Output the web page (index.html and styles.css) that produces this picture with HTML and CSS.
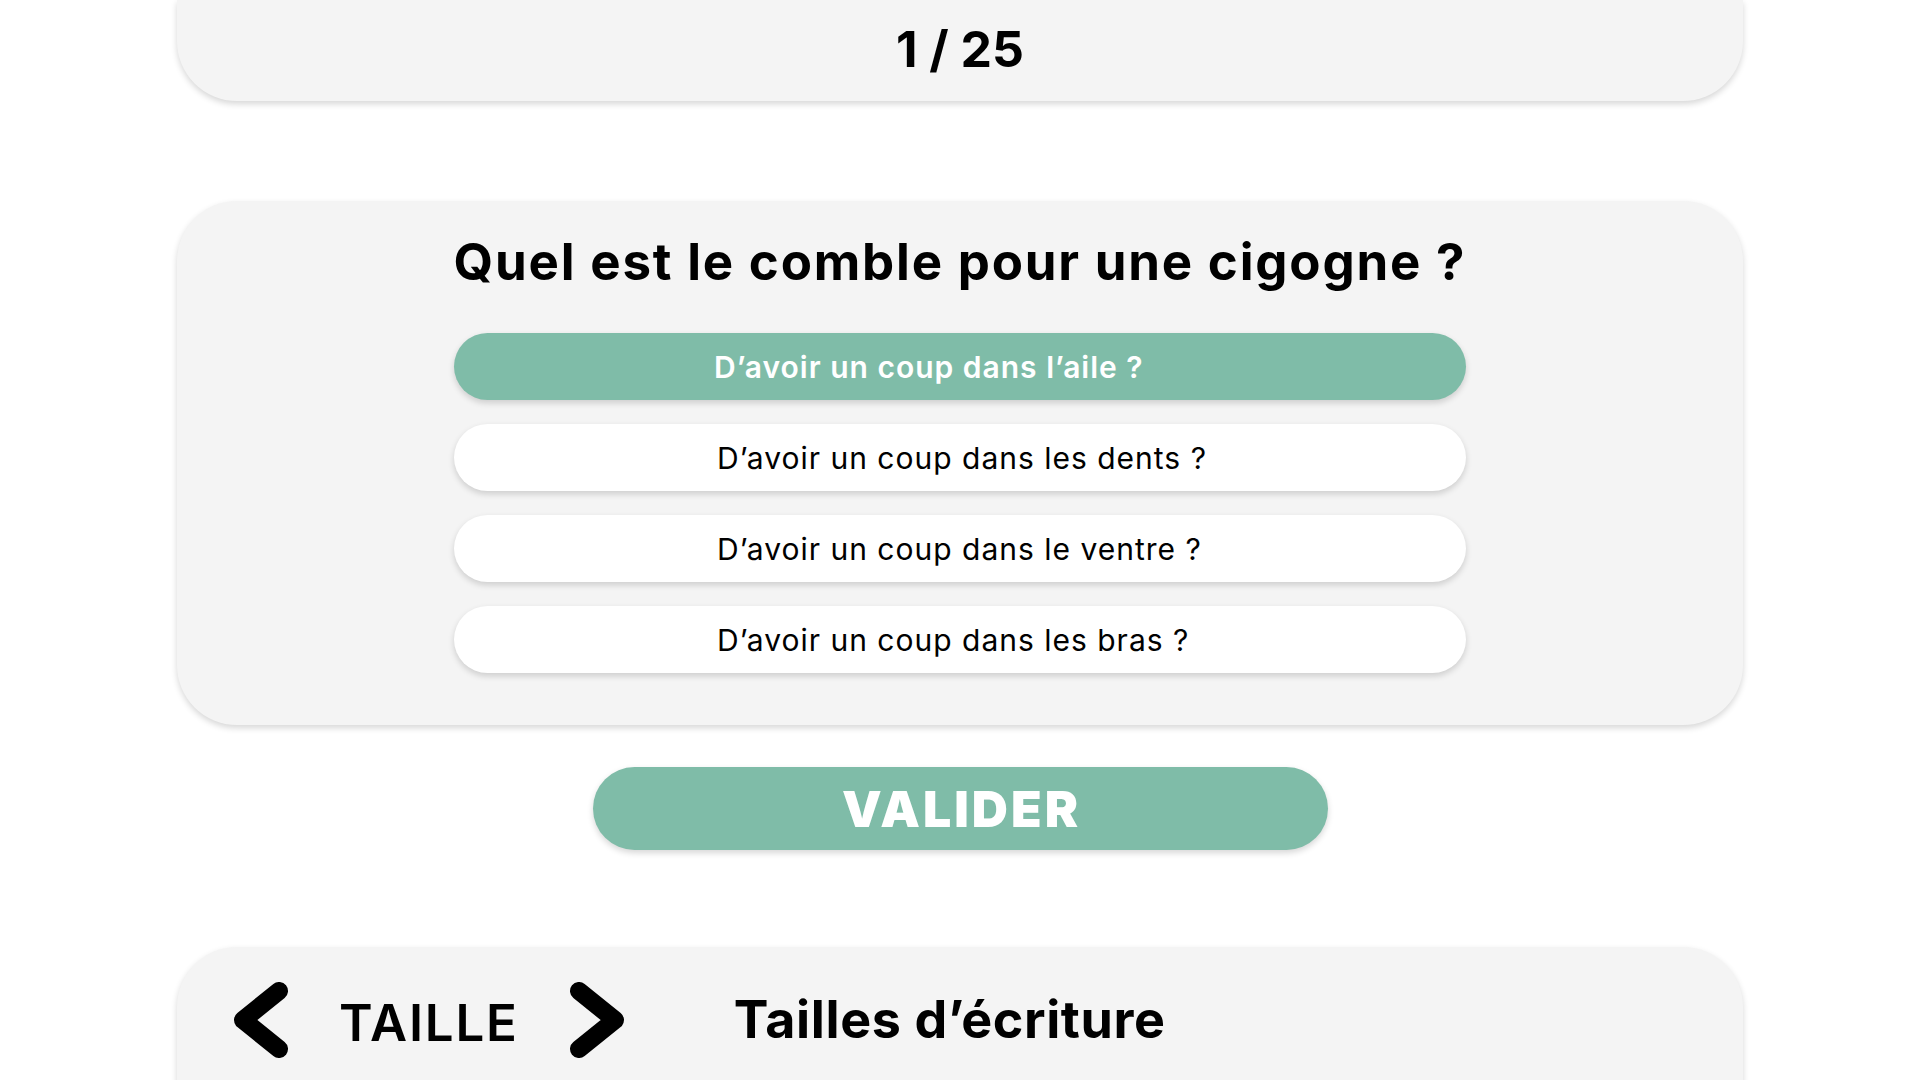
FILE: index.html
```html
<!DOCTYPE html>
<html lang="fr">
<head>
<meta charset="utf-8">
<title>Quiz</title>
<link rel="stylesheet" href="styles.css">
</head>
<body>
<main class="page">
  <section class="card counter-card">
    <div class="counter">1 / 25</div>
  </section>

  <section class="card question-card">
    <h1 class="question">Quel est le comble pour une cigogne ?</h1>
    <div class="options">
      <button class="option selected">D’avoir un coup dans l’aile ?</button>
      <button class="option">D’avoir un coup dans les dents ?</button>
      <button class="option">D’avoir un coup dans le ventre ?</button>
      <button class="option">D’avoir un coup dans les bras ?</button>
    </div>
  </section>

  <div class="validate-row">
    <button class="validate">VALIDER</button>
  </div>

  <section class="card settings-card">
    <div class="size-picker">
      <svg class="chevron" width="56" height="76" viewBox="0 0 56 76" aria-hidden="true">
        <polyline points="46,9 10,38 46,67" fill="none" stroke="#000" stroke-width="18" stroke-linecap="round" stroke-linejoin="round"/>
      </svg>
      <span class="size-label">TAILLE</span>
      <svg class="chevron" width="56" height="76" viewBox="0 0 56 76" aria-hidden="true">
        <polyline points="10,9 46,38 10,67" fill="none" stroke="#000" stroke-width="18" stroke-linecap="round" stroke-linejoin="round"/>
      </svg>
    </div>
    <h2 class="settings-title">Tailles d’écriture</h2>
  </section>
</main>
</body>
</html>
```

FILE: styles.css
```css
html, body {
  margin: 0;
  padding: 0;
  background: #ffffff;
  overflow: hidden;
}

body {
  font-family: Inter, "Noto Sans", "DejaVu Sans", sans-serif;
  color: #000;
}

.page {
  display: flex;
  flex-direction: column;
  align-items: center;
}

.card {
  width: 1566px;
  background: #f4f4f4;
  box-shadow: 0 3px 6px rgba(0, 0, 0, 0.16);
  box-sizing: border-box;
}

.counter-card {
  height: 101px;
  border-radius: 0 0 60px 60px;
  display: flex;
  align-items: center;
  justify-content: center;
  padding-bottom: 4px;
}

.counter {
  font-size: 50px;
  font-weight: 700;
  line-height: 1;
}

.question-card {
  margin-top: 100px;
  border-radius: 60px;
  padding: 30px 0 52px;
  display: flex;
  flex-direction: column;
  align-items: center;
}

.question {
  margin: 0;
  font-size: 51px;
  font-weight: 700;
  line-height: 62px;
  letter-spacing: 1.8px;
  text-align: center;
}

.options {
  margin-top: 40px;
  width: 1012px;
  display: flex;
  flex-direction: column;
  gap: 24px;
}

.option {
  height: 67px;
  border: none;
  border-radius: 34px;
  background: #ffffff;
  box-shadow: 0 3px 6px rgba(0, 0, 0, 0.16);
  font-family: inherit;
  font-size: 30px;
  font-weight: 400;
  letter-spacing: 1px;
  color: #000;
  text-align: left;
  padding: 0 0 0 263px;
}

.option.selected {
  background: #7fbca8;
  color: #ffffff;
  font-weight: 600;
  padding-left: 260px;
}

.validate-row {
  margin-top: 42px;
  display: flex;
  justify-content: center;
}

.validate {
  width: 735px;
  height: 83px;
  border: none;
  border-radius: 42px;
  background: #7fbca8;
  box-shadow: 0 3px 6px rgba(0, 0, 0, 0.16);
  color: #ffffff;
  font-family: inherit;
  font-size: 50px;
  font-weight: 900;
  letter-spacing: 3px;
  padding: 0 0 0 3px;
}

.settings-card {
  margin-top: 97px;
  height: 220px;
  border-radius: 60px 60px 0 0;
  padding: 35px 0 0 56px;
  display: flex;
  align-items: flex-start;
  gap: 109px;
}

.size-picker {
  display: flex;
  align-items: center;
  gap: 50px;
  height: 76px;
}

.chevron {
  display: block;
  flex: none;
}

.size-label {
  font-size: 51px;
  font-weight: 600;
  line-height: 1;
  letter-spacing: 1.8px;
  padding-top: 4px;
}

.settings-title {
  margin: 0;
  height: 76px;
  display: flex;
  align-items: center;
  font-size: 52px;
  font-weight: 700;
  letter-spacing: 0.6px;
  line-height: 1;
}
```
